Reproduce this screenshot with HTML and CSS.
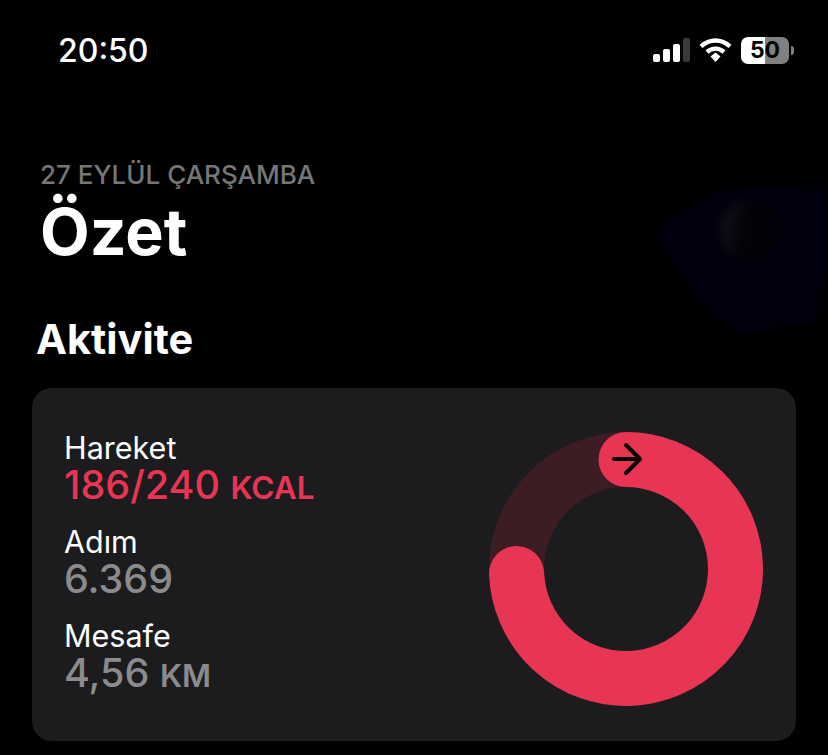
FILE: index.html
```html
<!DOCTYPE html>
<html lang="en">
<head>
    <meta charset="UTF-8">
    <meta name="viewport" content="width=device-width, initial-scale=1.0">
    <title>Özet</title>
    <link rel="stylesheet" href="styles.css">
</head>
<body>
    <div class="status-bar">
        <span class="clock">20:50</span>
        <div class="status-icons">
            <svg class="signal" width="37" height="24" viewBox="0 0 37 24">
                <rect x="0" y="16" width="7" height="8" rx="2" fill="#fff"/>
                <rect x="10" y="11" width="7" height="13" rx="2" fill="#fff"/>
                <rect x="20" y="6" width="7" height="18" rx="2" fill="#fff"/>
                <rect x="30" y="0" width="7" height="24" rx="2" fill="#3a3a3a"/>
            </svg>
            <svg class="wifi" width="33" height="24" viewBox="0 0 33 24">
                <path d="M2 8.500C10.500 0.500 22.500 0.500 31 8.500" fill="none" stroke="#fff" stroke-width="4.400"/>
                <path d="M8 14C13 9.500 20 9.500 25 14" fill="none" stroke="#fff" stroke-width="4.400"/>
                <path d="M11.500 18.500L16.500 14.500L21.500 18.500L16.500 24Z" fill="#fff"/>
            </svg>
            <div class="battery">
                <div class="battery-body"><span>50</span></div>
                <div class="battery-cap"></div>
            </div>
        </div>
    </div>

    <header class="summary-head">
        <svg class="wallpaper" width="188" height="170" viewBox="0 0 188 170">
            <defs>
                <linearGradient id="moon-shade" x1="0" y1="0" x2="1" y2="0.200">
                    <stop offset="0" stop-color="#14141c"/>
                    <stop offset="0.500" stop-color="#020208"/>
                </linearGradient>
            </defs>
            <path class="wallpaper-cloud" d="M14 58L80 20L188 14L188 100L176 150L100 165L60 130L30 90Z"/>
            <circle cx="110" cy="60" r="31" fill="url(#moon-shade)"/>
        </svg>
        <p class="date">27 EYLÜL ÇARŞAMBA</p>
        <h1 class="title">Özet</h1>
    </header>

    <h2 class="section-title">Aktivite</h2>

    <section class="activity-card">
        <div class="stats">
            <div class="stat">
                <span class="stat-label">Hareket</span>
                <span class="stat-value move">186/240 <small>KCAL</small></span>
            </div>
            <div class="stat">
                <span class="stat-label">Adım</span>
                <span class="stat-value">6.369</span>
            </div>
            <div class="stat">
                <span class="stat-label">Mesafe</span>
                <span class="stat-value">4,56 <small>KM</small></span>
            </div>
        </div>
        <svg class="ring" width="274" height="274" viewBox="0 0 274 274">
            <circle cx="137" cy="137" r="109.500" fill="none" stroke="#3c1d24" stroke-width="55"/>
            <path d="M137 27.500A109.500 109.500 0 1 1 27.600 141.500" fill="none" stroke="#e83554" stroke-width="55" stroke-linecap="round"/>
            <path d="M125 27H150M137 13L151 27L137 41" fill="none" stroke="#000" stroke-width="4" stroke-linecap="round" stroke-linejoin="round"/>
        </svg>
    </section>
</body>
</html>
```

FILE: styles.css
```css
* {
    margin: 0;
    padding: 0;
    box-sizing: border-box;
}

body {
    background-color: #000;
    color: #fff;
    font-family: 'Inter', 'Liberation Sans', sans-serif;
    width: 828px;
    height: 755px;
    overflow: hidden;
}

.status-bar {
    display: flex;
    justify-content: space-between;
    align-items: center;
    height: 50px;
    margin-top: 25px;
    padding: 0 34px 0 58px;
}

.clock {
    font-size: 32px;
    font-weight: 500;
}

.status-icons {
    display: flex;
    align-items: center;
    gap: 9px;
}

.signal, .wifi {
    display: block;
}

.battery {
    display: flex;
    align-items: center;
    gap: 2px;
}

.battery-body {
    width: 48px;
    height: 27px;
    border-radius: 7px;
    background: linear-gradient(to right, #fff 50%, #808080 50%);
    color: #000;
    font-size: 23px;
    font-weight: 700;
    line-height: 27px;
    text-align: center;
}

.battery-cap {
    width: 3px;
    height: 9px;
    border-radius: 0 3px 3px 0;
    background: #808080;
}

.summary-head {
    position: relative;
    margin-top: 85px;
    padding-left: 40px;
}

.wallpaper {
    position: absolute;
    top: 10px;
    right: 0;
    filter: blur(4px);
}

.wallpaper-cloud {
    fill: #00000e;
}

.date {
    font-size: 26px;
    font-weight: 500;
    line-height: 30px;
    color: #767676;
}

.title {
    margin-top: 4px;
    font-size: 64.500px;
    font-weight: 700;
    line-height: 76px;
}

.section-title {
    margin-top: 44px;
    padding-left: 36px;
    font-size: 41.500px;
    font-weight: 700;
    line-height: 50px;
}

.activity-card {
    display: flex;
    justify-content: space-between;
    align-items: flex-start;
    width: 764px;
    height: 353px;
    margin: 24px 0 0 32px;
    padding: 44px 33px 0 32px;
    border-radius: 20px;
    background: #1c1c1e;
}

.stats {
    display: flex;
    flex-direction: column;
    gap: 20px;
}

.stat {
    display: flex;
    flex-direction: column;
}

.stat-label {
    font-size: 30.500px;
    line-height: 32px;
}

.stat-value {
    font-size: 39.500px;
    font-weight: 500;
    line-height: 42px;
    color: #8b8b8e;
}

.stat-value small {
    font-size: 31.500px;
    font-weight: 600;
    line-height: 1;
}

.move {
    color: #e83554;
}

.ring {
    display: block;
}
```
